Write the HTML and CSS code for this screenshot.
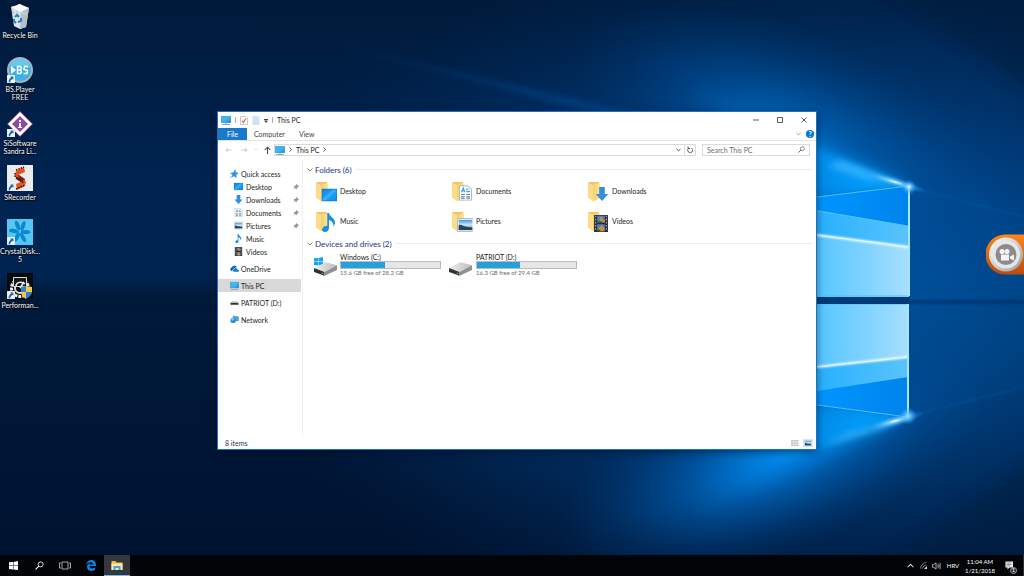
FILE: index.html
```html
<!DOCTYPE html>
<html lang="en">
<head>
<meta charset="utf-8">
<title>This PC</title>
<link rel="stylesheet" href="styles.css">
</head>
<body>
<svg class="sprite" aria-hidden="true">
  <defs>
    <linearGradient id="gFold" x1="0" y1="0" x2="1" y2="0"><stop offset="0" stop-color="#f3cc6a"/><stop offset="1" stop-color="#ffe59a"/></linearGradient>
    <linearGradient id="gScr" x1="0" y1="0" x2="1" y2="1"><stop offset="0" stop-color="#2fc4f6"/><stop offset=".5" stop-color="#45b4ee"/><stop offset="1" stop-color="#1591dc"/></linearGradient>
    <linearGradient id="gDesk" x1="0" y1="0" x2="1" y2="1"><stop offset="0" stop-color="#0f84e0"/><stop offset=".5" stop-color="#1fa4f6"/><stop offset="1" stop-color="#0c8df0"/></linearGradient>
    <linearGradient id="gSky" x1="0" y1="0" x2="0" y2="1"><stop offset="0" stop-color="#3c9be0"/><stop offset=".5" stop-color="#cfe8f6"/><stop offset="1" stop-color="#35556c"/></linearGradient>
    <linearGradient id="gDrive" x1="0" y1="0" x2="1" y2="0"><stop offset="0" stop-color="#f1f1f1"/><stop offset="1" stop-color="#b9b9b9"/></linearGradient>
    <linearGradient id="gMetal" x1="0" y1="0" x2="1" y2="1"><stop offset="0" stop-color="#ffffff"/><stop offset="1" stop-color="#9a9a9a"/></linearGradient>
  </defs>
  <symbol id="pc" viewBox="0 0 20 20"><path fill="#5b9cc6" d="M0 2h20v14H0z"/><path fill="url(#gScr)" d="M1 3h18v12H1z"/><path fill="#c3ccd3" d="M8 16h4v2H8z"/><path fill="#8fa3b2" d="M2 18h16v2H2z"/></symbol>
  <symbol id="desk" viewBox="0 0 20 18"><path fill="#0f78cd" d="M0 1h20v16H0z"/><path fill="url(#gDesk)" d="M1 2h18v14H1z"/><path fill="#5cc3ff" opacity=".4" d="M1 14 15 2h4L5 16H1z"/></symbol>
  <symbol id="down" viewBox="0 0 20 20"><path fill="#318fdd" d="M6 0h8v10h5L10 20 1 10h5z"/></symbol>
  <symbol id="doc" viewBox="0 0 20 20"><path fill="#fff" stroke="#99a8b3" d="M2 .5h12l4 4v15H2z"/><path fill="#cddbe5" d="M14 1v4h4z"/><path stroke="#4aa0dc" stroke-width="2" fill="none" d="M5 9l2-5 2 5M11 5h2M11 8h5"/><path stroke="#5d7f99" stroke-width="1.5" d="M4 12h5M4 15h5M4 17h5M11 12h5M11 15h5M11 17h5"/></symbol>
  <symbol id="pic" viewBox="0 0 20 16"><path fill="#f4f6f7" stroke="#a3adb5" d="M.5.5h19v15H.5z"/><path fill="url(#gSky)" d="M2 2h16v12H2z"/><path fill="#24465e" d="M2 8c4-1 5 2 9 2s5 1 7 1v3H2z"/></symbol>
  <symbol id="music" viewBox="0 0 16 22"><path fill="#168fe2" d="M6 0h2c1 5 7 6 7 11 0 2-1 4-2 5 1-5-2-7-5-8v9c0 3-2 5-5 5s-4-3-2-5c1-2 3-2 5-2z"/></symbol>
  <symbol id="video" viewBox="0 0 18 22"><path fill="#2b2f35" d="M0 0h18v22H0z"/><path fill="#4c7fc8" d="M4 1h10v9H4zM4 12h10v9H4z"/><path fill="#d98a2c" d="M7 3h4v3h3v3H8zM6 17l4-4 4 5-2 3H7z"/><path fill="#345b2f" d="M4 8h6v2H4zM4 19h4v2H4z"/><path stroke="#9ba4ae" stroke-width="1.5" stroke-dasharray="2 2" d="M2 1v20M16 1v20"/></symbol>
  <symbol id="folder" viewBox="0 0 16 24"><path fill="#eec566" d="M0 1h12l1 3v15L4 20 0 19z"/><path fill="url(#gFold)" d="M5 3h9v17l-8 3z"/><path fill="#fbdc88" d="M0 1l6 4v18l-6-4z"/></symbol>
  <symbol id="star" viewBox="0 0 20 20"><path fill="#2f97de" d="M12 0l1 7 7 2-6 4 1 7-6-4-6 3 2-6-5-4 7-1z"/><path stroke="#8da9bd" stroke-width="2" d="M0 20l6-6"/></symbol>
  <symbol id="cloud" viewBox="0 0 20 14"><path fill="#0b62b4" d="M1 10c-1-3 1-5 3-5 1-5 9-6 11-1l-1 1c-4-1-6 2-6 4-3 0-4 2-3 4-2 0-4-1-4-3z"/><path fill="#1379cf" d="M9 14c-4 0-4-4 0-4 0-5 6-5 7-1 5 0 5 5 2 5z"/></symbol>
  <symbol id="stick" viewBox="0 0 20 12"><path fill="#bfc3c6" d="M4 3h12l3 4H1z"/><path fill="#2f3335" d="M1 7h18v4H1z"/><path fill="#5bd36b" d="M15 8h2v1h-2z"/></symbol>
  <symbol id="net" viewBox="0 0 20 18"><path fill="#4aa6e0" stroke="#3d81b0" d="M7 1l12 2v9L7 13z"/><circle cx="7" cy="11" r="6" fill="#2b8fd6"/><path fill="#8fd0f3" d="M3 8c3-3 6-2 7 0-2 2-3 1-4 3s-3 0-3-3z"/></symbol>
  <symbol id="pin" viewBox="0 0 12 12"><path fill="#8d99a2" d="M7 0l5 5-2 1-2 2-1 3-3-3-4 4 3-5-2-2 3-1 2-2z"/></symbol>
  <symbol id="drive" viewBox="0 0 24 14"><path fill="url(#gDrive)" d="M0 6 12 0l12 3-13 7z"/><path fill="#303335" d="M0 6l11 4v4L0 10z"/><path fill="#8e9193" d="M11 10l13-7v5l-13 6z"/><path fill="#5bd36b" d="M8 11h2v1H8z"/></symbol>
  <symbol id="win" viewBox="0 0 20 20"><path d="M0 3l9-1v8H0zM10 2l10-2v10H10zM0 11h9v8l-9-1zM10 11h10v9l-10-1z"/></symbol>
  <symbol id="arrow" viewBox="0 0 10 10"><path fill="#f2f6fa" stroke="#b9c7d3" stroke-width=".5" d="M0 0h10v10H0z"/><path fill="#1d62b5" d="M4 2h4v4L7 5C5 6 4 7 4 9H2c0-3 1-4 3-6z"/></symbol>
  <symbol id="mag" viewBox="0 0 16 16"><circle cx="10" cy="6" r="4.5" fill="none" stroke="currentColor" stroke-width="1.5"/><path stroke="currentColor" stroke-width="2" d="M7 9l-6 6"/></symbol>
  <symbol id="chev" viewBox="0 0 12 8"><path fill="none" stroke="currentColor" stroke-width="1.8" d="M1 1l5 5 5-5"/></symbol>
  <symbol id="left" viewBox="0 0 16 12"><path fill="none" stroke="currentColor" stroke-width="2" d="M15 6H2M7 1L2 6l5 5"/></symbol>
</svg>

<div class="screen">
  <svg class="wallpaper" viewBox="0 0 1024 576" preserveAspectRatio="none" aria-hidden="true">
    <defs>
      <linearGradient id="base" x1="0" y1="0" x2="0" y2="1"><stop offset="0" stop-color="#001a3a"/><stop offset=".3" stop-color="#002350"/><stop offset=".48" stop-color="#002451"/><stop offset=".53" stop-color="#001a3b"/><stop offset="1" stop-color="#001330"/></linearGradient>
      <radialGradient id="wide"><stop offset="0" stop-color="#0060b6"/><stop offset=".35" stop-color="#00529f" stop-opacity=".85"/><stop offset=".7" stop-color="#003e80" stop-opacity=".45"/><stop offset="1" stop-color="#002a5c" stop-opacity="0"/></radialGradient>
      <radialGradient id="halo"><stop offset="0" stop-color="#0086ea" stop-opacity=".95"/><stop offset=".45" stop-color="#006bc6" stop-opacity=".5"/><stop offset=".75" stop-color="#005bb0" stop-opacity=".18"/><stop offset="1" stop-color="#00529f" stop-opacity="0"/></radialGradient>
      <radialGradient id="spark"><stop offset="0" stop-color="#fff"/><stop offset=".25" stop-color="#8fdcff" stop-opacity=".8"/><stop offset="1" stop-color="#0090ff" stop-opacity="0"/></radialGradient>
      <linearGradient id="pane" x1="0" y1="0" x2="1" y2="0"><stop offset="0" stop-color="#55c5ff"/><stop offset="1" stop-color="#a6dfff"/></linearGradient>
      <linearGradient id="band" x1="0" y1="0" x2="1" y2="0"><stop offset="0" stop-color="#27b0ff"/><stop offset="1" stop-color="#5ac4fb"/></linearGradient>
      <linearGradient id="deep" x1="0" y1="0" x2="1" y2="0"><stop offset="0" stop-color="#0096ff"/><stop offset="1" stop-color="#0083ec"/></linearGradient>
      <linearGradient id="ray" x1="0" y1="0" x2="1" y2="0"><stop offset="0" stop-color="#0067bd" stop-opacity="0"/><stop offset="1" stop-color="#1c98f5"/></linearGradient>
      <linearGradient id="fan" gradientUnits="userSpaceOnUse" x1="690" y1="0" x2="860" y2="0"><stop offset="0" stop-color="#0084e8" stop-opacity="0"/><stop offset="1" stop-color="#00a0ff"/></linearGradient>
      <linearGradient id="streak" gradientUnits="userSpaceOnUse" x1="320" y1="0" x2="640" y2="0"><stop offset="0" stop-color="#0873ca" stop-opacity="0"/><stop offset="1" stop-color="#0873ca"/></linearGradient>
      <filter id="b3" x="-20%" y="-60%" width="140%" height="220%"><feGaussianBlur stdDeviation="3"/></filter>
      <filter id="b1"><feGaussianBlur stdDeviation="1"/></filter>
      <filter id="b8" x="-30%" y="-30%" width="160%" height="160%"><feGaussianBlur stdDeviation="8"/></filter>
    </defs>
    <path fill="url(#base)" d="M0 0h1024v576H0z"/>
    <ellipse cx="830" cy="290" rx="600" ry="360" fill="url(#wide)" opacity=".85"/>
    <path filter="url(#b8)" fill="#001a3a" opacity=".45" d="M860-30h210v150zM1060 440v170H820z"/>
    <ellipse cx="790" cy="130" rx="230" ry="100" fill="url(#halo)" opacity=".65" transform="rotate(22 790 130)"/>
    <ellipse cx="775" cy="458" rx="230" ry="95" fill="url(#halo)" transform="rotate(-22 775 458)"/>
    <path filter="url(#b3)" fill="url(#ray)" opacity=".2" d="M330 40l580 146-90 10L640 130z"/>
    <path filter="url(#b3)" fill="none" stroke="url(#streak)" stroke-width="4" opacity=".4" d="M340 46l300 72"/>
    <path fill="#00152f" opacity=".4" filter="url(#b3)" d="M-20 288h238v18H-20z"/>
    <path fill="#002c5e" opacity=".5" filter="url(#b1)" d="M909 300h115v4H909z"/>
    <path filter="url(#b8)" fill="url(#fan)" opacity=".6" d="M909 186L690 80v120zM907 417L690 520V404z"/>
    <path filter="url(#b3)" fill="url(#fan)" opacity=".8" d="M909 188L780 132v72zM907 415L780 462v-64z"/>
    <path filter="url(#b3)" fill="#3fb9ff" opacity=".7" d="M909 186l-68-26-14 6 40 14zM907 417l-60 16-26 14 62-18z"/>
    <path fill="url(#deep)" d="M817 197l92-11v42l-92-15zM817 389l91-14v41l-91-11z"/>
    <path fill="url(#band)" d="M817 210l92 16v22l-92-12zM817 366l91-10v21l-91 14z"/>
    <path fill="url(#pane)" d="M817 235l92 12v50h-92zM817 304h92v53l-92 10z"/>
    <path filter="url(#b1)" fill="none" stroke="#fff" stroke-width="2" d="M817 235l92 12M817 367l91-10"/>
    <path fill="none" stroke="#e6f7ff" d="M817 235l92 12M817 367l91-10"/>
    <path fill="none" stroke="#4cc0ff" d="M817 197l92-11M817 405l91 12M817 211l91 15M817 304h92M817 296h92"/>
    <path fill="none" stroke="#a8e5ff" stroke-width="2" d="M909 186v110M908 304v112"/>
    <path fill="#003a77" d="M817 297h93v7h-93z"/>
    <ellipse cx="895" cy="182" rx="34" ry="5" fill="url(#spark)" transform="rotate(17 895 182)"/>
    <circle cx="909" cy="187" r="8" fill="url(#spark)"/><circle cx="908" cy="416" r="9" fill="url(#spark)"/>
    <ellipse cx="895" cy="421" rx="31" ry="6" fill="url(#spark)" transform="rotate(-16 895 421)"/>
    <path filter="url(#b1)" fill="none" stroke="#1280d6" opacity=".3" d="M909 187l115 30M909 416l115-29"/>
  </svg>

  <main class="desktop">
    <nav class="shortcuts" aria-label="Desktop">
      <a class="shortcut" href="#"><svg class="big" viewBox="0 0 26 26"><path fill="#dfe4e6" d="M4 4l9-3 9 4-3 19-6 2-6-3z"/><path fill="#f8fafb" d="M4 4l5-1 3-2 4 2 6 2-8 4z"/><path fill="#b7bfc4" d="M14 9l8-4-3 19-6 2z"/><path fill="#c9d0d4" d="M5 6l3 4 2-3 2 5 3-4 2 3 3-4-1 5-4-1-3 2-4-3-3 2z"/><path fill="none" stroke="#1684d3" stroke-width="2" d="M8 14l2-2 2 2M14 15v3l-3 1M9 20l-2-2v-2"/></svg><span>Recycle Bin</span></a>
      <a class="shortcut" href="#"><svg class="big" viewBox="0 0 26 26"><circle cx="13" cy="13" r="12" fill="#3eb1e6" stroke="#a9b3b8" stroke-width="2"/><path fill="#85d4f5" opacity=".6" d="M3 11a10 10 0 0 1 20 0c-7-3-13-3-20 0z"/><path fill="#fff" d="M4 9l5 4-5 4z"/><path fill="none" stroke="#fff" stroke-width="1.5" d="M10.500 9.500h3l1 1.500-1 2 1 2-1 1.500h-3zM10.500 13h3M21 9.500h-3.500l-.5 3 3.500 1-.5 3h-3.500"/><use href="#arrow" x="0" y="18" width="8" height="8"/></svg><span>BS.Player FREE</span></a>
      <a class="shortcut" href="#"><svg class="big" viewBox="0 0 26 26"><path fill="#8c49a8" d="M13 0l13 13-13 13L0 13z"/><path fill="#fff" d="M13 1l12 12-12 12L1 13z"/><path fill="#8c49a8" d="M13 5l8 8-8 8-8-8z"/><path fill="#fff" d="M12 9h2v2h-2zM12 12h2v4h1v1h-4v-1h1z"/><use href="#arrow" x="0" y="18" width="8" height="8"/></svg><span>SiSoftware Sandra Li...</span></a>
      <a class="shortcut" href="#"><svg class="big" viewBox="0 0 26 26"><path fill="#ececec" d="M0 0h26v26H0z"/><path fill="#6a2412" d="M9 8l9 6-1 5-8-5z"/><path fill="#e9541e" d="M9 6l8-4 1 5-7 3 1 3-4-2zM9 19l7-3 1-2 2 3-1 4-8 4z"/><path fill="none" stroke="#2e1510" stroke-width="1.500" stroke-dasharray="1.500 1" d="M9 5l8-3M9 24l9-4M8 8v4l9 6"/><use href="#arrow" x="0" y="18" width="8" height="8"/></svg><span>SRecorder</span></a>
      <a class="shortcut" href="#"><svg class="big" viewBox="0 0 26 26"><path fill="#58c6f2" d="M0 0h26v26H0z"/><g fill="#0989d2"><ellipse cx="16" cy="7" rx="2" ry="5" transform="rotate(20 16 7)"/><ellipse cx="18.500" cy="13" rx="5" ry="2"/><ellipse cx="16" cy="18.500" rx="2" ry="5" transform="rotate(-30 16 18.500)"/><ellipse cx="10" cy="18" rx="2" ry="5" transform="rotate(25 10 18)"/><ellipse cx="7" cy="12" rx="5" ry="2" transform="rotate(10 7 12)"/><ellipse cx="10.500" cy="6.500" rx="2" ry="5" transform="rotate(-20 10.500 6.500)"/></g><use href="#arrow" x="0" y="18" width="8" height="8"/></svg><span>CrystalDisk... 5</span></a>
      <a class="shortcut" href="#"><svg class="big" viewBox="0 0 26 26"><path fill="#08090b" d="M0 0h26v26H0z"/><circle cx="13" cy="15" r="8.500" fill="none" stroke="#eee" stroke-width="3" stroke-dasharray="3 1"/><circle cx="13" cy="15" r="5" fill="none" stroke="#ddd" stroke-width="2"/><path fill="#16181b" stroke="#ddd" d="M6.500 4.500h13v9h-13z"/><path fill="none" stroke="#eee" stroke-width="1.500" d="M9 13c0-4 6-5 9-2M13 15l4-6"/><path fill="#2d83d2" d="M14 14l5-1v6h-5zM19 19h6c0 3-3 5-6 7z"/><path fill="#f7c843" d="M19 13l6 1v5h-6zM14 19h5v7c-3-2-5-4-5-7z"/><use href="#arrow" x="0" y="18" width="8" height="8"/></svg><span>Performan...</span></a>
    </nav>

    <section class="window" aria-label="This PC">
      <header class="titlebar">
        <svg class="ic10"><use href="#pc"/></svg><i class="rule"></i>
        <svg class="ic8" viewBox="0 0 16 18"><path fill="#fff" stroke="#8c959c" d="M1 1h11l3 3v13H1z"/><path fill="none" stroke="#df6a2e" stroke-width="2.500" d="M4 9l3 4 5-8"/></svg>
        <svg class="ic8" viewBox="0 0 16 18"><path fill="#cfe3f4" d="M1 0h14v18H1z"/><path fill="#e6f1fa" d="M10 0h5v7z"/></svg>
        <svg class="ic4" viewBox="0 0 8 10"><path fill="#444" d="M0 2h8v2H0zM0 5h8L4 10z"/></svg><i class="rule"></i>
        <h1>This PC</h1>
        <div class="controls">
          <button aria-label="Minimize"><svg viewBox="0 0 12 12"><path stroke="#222" stroke-width="1.500" d="M0 6h12"/></svg></button>
          <button aria-label="Maximize"><svg viewBox="0 0 12 12"><path fill="none" stroke="#222" stroke-width="1.500" d="M1 1h10v10H1z"/></svg></button>
          <button aria-label="Close"><svg viewBox="0 0 12 12"><path stroke="#222" stroke-width="1.500" d="M1 1l10 10M11 1L1 11"/></svg></button>
        </div>
      </header>
      <div class="tabs">
        <button class="file">File</button><button>Computer</button><button>View</button>
        <svg class="expand"><use href="#chev"/></svg>
        <button class="help" aria-label="Help">?</button>
      </div>
      <div class="addressrow">
        <button class="nav dim" aria-label="Back"><svg><use href="#left"/></svg></button>
        <button class="nav dim" aria-label="Forward"><svg viewBox="0 0 16 12"><path fill="none" stroke="currentColor" stroke-width="2" d="M1 6h13M9 1l5 5-5 5"/></svg></button>
        <button class="nav small dim" aria-label="Recent"><svg><use href="#chev"/></svg></button>
        <button class="nav up" aria-label="Up"><svg viewBox="0 0 12 14"><path fill="none" stroke="currentColor" stroke-width="1.800" d="M6 14V2M1 7l5-5 5 5"/></svg></button>
        <div class="address">
          <svg class="ic10"><use href="#pc"/></svg><svg class="sep" viewBox="0 0 6 10"><path fill="none" stroke="#444" stroke-width="1.800" d="M1 1l4 4-4 4"/></svg><a href="#">This PC</a><svg class="sep" viewBox="0 0 6 10"><path fill="none" stroke="#444" stroke-width="1.800" d="M1 1l4 4-4 4"/></svg>
          <button class="drop" aria-label="Previous locations"><svg><use href="#chev"/></svg></button>
          <button class="refresh" aria-label="Refresh"><svg viewBox="0 0 12 14"><path fill="none" stroke="#333" stroke-width="1.600" d="M4 4a5 5 0 1 0 5 0M2 1v4h4"/></svg></button>
        </div>
        <label class="search"><input type="search" placeholder="Search This PC" aria-label="Search This PC"><svg><use href="#mag"/></svg></label>
      </div>
      <div class="body">
        <nav class="side" aria-label="Navigation">
          <div class="group">
            <a href="#"><svg><use href="#star"/></svg><span>Quick access</span></a>
            <a class="sub" href="#"><svg><use href="#desk"/></svg><span>Desktop</span><svg class="pin"><use href="#pin"/></svg></a>
            <a class="sub" href="#"><svg><use href="#down"/></svg><span>Downloads</span><svg class="pin"><use href="#pin"/></svg></a>
            <a class="sub" href="#"><svg><use href="#doc"/></svg><span>Documents</span><svg class="pin"><use href="#pin"/></svg></a>
            <a class="sub" href="#"><svg><use href="#pic"/></svg><span>Pictures</span><svg class="pin"><use href="#pin"/></svg></a>
            <a class="sub" href="#"><svg><use href="#music"/></svg><span>Music</span></a>
            <a class="sub" href="#"><svg><use href="#video"/></svg><span>Videos</span></a>
          </div>
          <a href="#"><svg><use href="#cloud"/></svg><span>OneDrive</span></a>
          <a class="current" href="#"><svg><use href="#pc"/></svg><span>This PC</span></a>
          <a href="#"><svg><use href="#stick"/></svg><span>PATRIOT (D:)</span></a>
          <a href="#"><svg><use href="#net"/></svg><span>Network</span></a>
        </nav>
        <div class="content">
          <h2><svg><use href="#chev"/></svg>Folders (6)</h2>
          <div class="grid">
            <a href="#"><svg viewBox="0 0 24 24"><use href="#folder" x="3" y="1" width="14" height="23"/><use href="#desk" x="8" y="9" width="17" height="14"/></svg>Desktop</a>
            <a href="#"><svg viewBox="0 0 24 24"><use href="#folder" x="3" y="1" width="14" height="23"/><use href="#doc" x="9" y="6" width="15" height="16"/></svg>Documents</a>
            <a href="#"><svg viewBox="0 0 24 24"><use href="#folder" x="3" y="1" width="14" height="23"/><use href="#down" x="10" y="8" width="14" height="14"/></svg>Downloads</a>
            <a href="#"><svg viewBox="0 0 24 24"><use href="#folder" x="3" y="1" width="14" height="23"/><use href="#music" x="9" y="4" width="14" height="19"/></svg>Music</a>
            <a href="#"><svg viewBox="0 0 24 24"><use href="#folder" x="3" y="1" width="14" height="23"/><use href="#pic" x="8" y="9" width="17" height="14"/></svg>Pictures</a>
            <a href="#"><svg viewBox="0 0 24 24"><use href="#folder" x="3" y="1" width="14" height="23"/><use href="#video" x="9" y="6" width="14" height="17"/></svg>Videos</a>
          </div>
          <h2><svg><use href="#chev"/></svg>Devices and drives (2)</h2>
          <div class="grid drives">
            <a href="#"><svg viewBox="0 0 24 24"><use href="#win" x="1" y="4" width="9" height="9" fill="#12a5ec"/><use href="#drive" x="1" y="9" width="23" height="14"/></svg><span class="info"><span>Windows (C:)</span><progress max="282" value="124" aria-label="Space used on C:"></progress><small>15.6 GB free of 28.2 GB</small></span></a>
            <a href="#"><svg viewBox="0 0 24 24"><use href="#drive" x="0" y="9" width="23" height="14"/></svg><span class="info"><span>PATRIOT (D:)</span><progress max="294" value="128" aria-label="Space used on D:"></progress><small>16.3 GB free of 29.4 GB</small></span></a>
          </div>
        </div>
      </div>
      <footer class="status"><span>8 items</span>
        <button aria-label="Details"><svg viewBox="0 0 18 14"><path stroke="#7d8891" stroke-width="2" stroke-dasharray="5 1" d="M0 2h18M0 7h18M0 12h18"/></svg></button>
        <button class="on" aria-label="Large icons"><svg><use href="#pic"/></svg></button>
      </footer>
    </section>

    <button class="recorder" aria-label="Screen recorder"><svg viewBox="0 0 38 40"><defs><linearGradient id="or" x1="0" y1="0" x2="0" y2="1"><stop offset="0" stop-color="#ff861c"/><stop offset="1" stop-color="#bd4b0c"/></linearGradient></defs><path fill="url(#or)" d="M38 0v40H19A19.500 20 0 0 1 19 0z"/><circle cx="20" cy="20" r="17" fill="url(#gMetal)"/><circle cx="20" cy="20" r="14" fill="#e6e6e6"/><circle cx="20" cy="20" r="10.500" fill="#8b8b8b"/><g fill="#f5f5f5"><circle cx="16" cy="17" r="2.500"/><circle cx="21" cy="17" r="2.500"/><path d="M15 20h8v6h-8zM24 22l4-2v6l-4-2z"/></g></svg></button>
  </main>

  <footer class="taskbar">
    <button aria-label="Start"><svg class="t9" fill="#fff"><use href="#win"/></svg></button>
    <button aria-label="Search"><svg class="t9"><use href="#mag"/></svg></button>
    <button aria-label="Task view"><svg class="t12" viewBox="0 0 24 18"><path fill="none" stroke="#ccc" stroke-width="1.600" d="M6 2h12v14H6zM4 4H1v10h3M20 4h3v10h-3"/></svg></button>
    <button aria-label="Edge"><svg class="t12" viewBox="0 0 22 22"><path fill="#0a84e4" d="M1 10C2 4 6 0 12 0c6 0 9 5 9 12H8c0 5 6 6 11 3v5c-7 4-16 2-16-6 0-4 3-7 6-8-1 1-1 2-1 3h7c0-6-9-6-14 1z"/></svg></button>
    <button class="active" aria-label="File Explorer"><svg class="t12" viewBox="0 0 24 20"><path fill="#f0b94f" d="M1 1h8l2 3h12v15H1z"/><path fill="#ffe8a2" d="M1 6h22v13H1z"/><path fill="#36a9e2" d="M5 11h14v8h-4v-4H9v4H5z"/></svg></button>
    <div class="tray">
      <button aria-label="Show hidden icons"><svg class="hid" viewBox="0 0 12 8"><path fill="none" stroke="#ddd" stroke-width="1.800" d="M1 7l5-5 5 5"/></svg></button>
      <button aria-label="Network"><svg class="t7" viewBox="0 0 14 14"><path fill="none" stroke="#a9a9a9" stroke-width="1.500" d="M1 13C2 6 7 1 13 1M5 13c1-4 4-7 8-7"/><path fill="#ddd" d="M8 14l6-6v6z"/></svg></button>
      <button aria-label="Volume"><svg class="t10" viewBox="0 0 20 16"><path fill="none" stroke="#eee" stroke-width="1.500" d="M1 5h3l5-4v14l-5-4H1zM12 5c2 2 2 4 0 6M14 3c3 3 3 7 0 10M17 1c4 4 4 10 0 14"/></svg></button>
      <button class="lang">HRV</button>
      <button class="clock"><time>11:04 AM<br>1/21/2018</time></button>
      <button class="notes" aria-label="1 notification"><svg viewBox="0 0 18 18"><path fill="#f2f2f2" d="M1 1h15v12H9l-4 4v-4H1z"/><path stroke="#333" d="M3 4h10M3 7h10M3 10h7"/></svg><b>1</b></button>
    </div>
  </footer>
</div>
</body>
</html>
```

FILE: styles.css
```css
* { box-sizing: border-box; }
html, body { height: 100%; }
body {
  margin: 0;
  overflow: hidden;
  font: 7px/8px Lato, "Open Sans", sans-serif;
  color: #1c1c1c;
}
a { color: inherit; text-decoration: none; }
button {
  display: flex;
  align-items: center;
  justify-content: center;
  padding: 0;
  border: 0;
  background: none;
  color: inherit;
  font: inherit;
}
h1, h2 { margin: 0; font: inherit; }
svg { display: block; flex: none; }
.sprite { position: absolute; width: 0; height: 0; }

.screen { position: relative; display: flex; flex-direction: column; height: 100%; background: #001a3b; }
.wallpaper { position: absolute; inset: 0; width: 100%; height: 100%; }
.desktop { position: relative; flex: 1; min-height: 0; }

.shortcuts { display: flex; flex-direction: column; width: 40px; padding-top: 3px; }
.shortcut {
  display: flex;
  flex-direction: column;
  align-items: center;
  gap: 2px;
  height: 54px;
  color: #fff;
  text-align: center;
  text-shadow: 0 1px 1px #000, 0 0 2px #000;
}
.big { width: 26px; height: 26px; }

.window {
  position: absolute;
  inset: 111px 207px 105px 217px;
  display: flex;
  flex-direction: column;
  border: 1px solid #1874bf;
  background: #fff;
  box-shadow: 0 2px 8px rgba(0, 10, 30, .5);
}
.titlebar { display: flex; align-items: center; gap: 4px; height: 16px; padding-left: 3px; }
.ic10 { width: 10px; height: 10px; }
.ic8 { width: 8px; height: 9px; }
.ic4 { width: 4px; height: 5px; }
.rule { width: 1px; height: 6px; background: #aaa; }
.controls { display: flex; margin-left: auto; }
.controls button { width: 24px; height: 16px; }
.controls svg { width: 6px; height: 6px; }

.tabs { display: flex; align-items: center; height: 13px; padding-right: 2px; border-bottom: 1px solid #e2e3e4; color: #444; }
.tabs button { height: 12px; padding: 0 7px; }
.tabs .file { width: 29px; background: #1979ca; color: #fff; }
.expand { width: 5px; height: 4px; margin: 0 5px 0 auto; color: #888; }
.tabs .help { width: 8px; height: 8px; padding: 0; border-radius: 50%; background: #0078d7; color: #fff; font-weight: 700; }

.addressrow { display: flex; align-items: center; height: 17px; padding: 0 6px 0 2px; }
.nav { width: 16px; height: 12px; }
.nav svg { width: 7px; height: 6px; }
.dim { color: #c4c4c4; }
.nav.small { width: 8px; }
.nav.small svg { width: 4px; height: 3px; }
.nav.up { width: 14px; color: #444; }
.nav.up svg { height: 8px; }
.address { display: flex; flex: 1; align-items: center; gap: 4px; height: 12px; border: 1px solid #dcdcdc; }
.sep { width: 3px; height: 5px; }
.drop { width: 12px; height: 10px; margin-left: auto; }
.drop svg { width: 5px; height: 4px; }
.refresh { width: 11px; height: 10px; margin-left: -4px; border-left: 1px solid #dcdcdc; }
.refresh svg { width: 6px; height: 7px; }
.search { display: flex; align-items: center; width: 108px; height: 12px; margin-left: 6px; padding: 0 4px; border: 1px solid #dcdcdc; color: #555; }
.search input { flex: 1; min-width: 0; padding: 0; border: 0; outline: 0; background: none; font: inherit; }
.search input::placeholder { color: #6d6d6d; opacity: 1; }
.search svg { width: 7px; height: 7px; }

.body { display: flex; flex: 1; min-height: 0; padding-top: 2px; }
.side { display: flex; flex-direction: column; gap: 4px; width: 85px; padding: 7px 1px 0 0; border-right: 1px solid #f1f1f1; }
.side a { display: flex; align-items: center; gap: 2px; height: 13px; padding-left: 12px; }
.side a svg { width: 9px; height: 9px; }
.side a.sub { padding-left: 16px; gap: 3px; }
.side a .pin { width: 6px; height: 6px; margin: 0 2px 0 auto; }
.side .current { background: #d9d9d9; }

.content { flex: 1; padding: 2px 3px 0 4px; }
.content h2 { display: flex; align-items: center; gap: 2px; height: 14px; padding-top: 1px; color: #1e3287; font-size: 8px; line-height: 12px; }
.content h2::after { content: ""; flex: 1; height: 1px; margin-left: 2px; background: #ececec; }
.content h2 svg { width: 6px; height: 4px; color: #777; }
.grid { display: grid; grid-template-columns: repeat(auto-fill, 136px); padding-left: 6px; }
.grid a { display: flex; align-items: center; gap: 3px; height: 30px; }
.grid a > svg { width: 24px; height: 24px; }
.info { display: flex; flex-direction: column; width: 101px; }
.info small { color: #6d6d6d; font-size: 6px; }
progress { width: 100%; height: 8px; border: 1px solid #bcbcbc; appearance: none; background: #e6e6e6; }
progress::-webkit-progress-bar { background: #e6e6e6; }
progress::-webkit-progress-value { background: #26a0da; }

.status { display: flex; align-items: center; gap: 3px; height: 13px; padding: 0 3px 0 7px; color: #1e395b; }
.status span { margin-right: auto; }
.status button { width: 10px; height: 8px; }
.status svg { width: 8px; height: 6px; }
.status .on { background: #cce8ff; }

.recorder { position: absolute; top: 234px; right: 0; }
.recorder svg { width: 38px; height: 41px; }

.taskbar { position: relative; display: flex; height: 21px; background: #020407; color: #fff; }
.taskbar > button { width: 26px; }
.taskbar .active { border-bottom: 1px solid #76b9ed; background: #34383d; }
.t9 { width: 9px; height: 9px; }
.t12 { width: 12px; height: 11px; }
.tray { display: flex; margin-left: auto; padding-right: 2px; border-right: 1px solid #2b2e32; }
.tray button { width: 13px; }
.hid { width: 7px; height: 5px; }
.t7 { width: 7px; height: 7px; }
.t10 { width: 9px; height: 8px; }
.tray .lang { width: 20px; font-size: 6px; }
.tray .clock { width: 34px; font-size: 6px; line-height: 9px; }
.tray .notes { position: relative; width: 24px; }
.notes svg { width: 9px; height: 9px; }
.notes b { position: absolute; right: 4px; bottom: 2px; width: 7px; height: 7px; border: 1px solid #aaa; border-radius: 50%; background: #222; font-size: 5px; line-height: 5px; }
```
